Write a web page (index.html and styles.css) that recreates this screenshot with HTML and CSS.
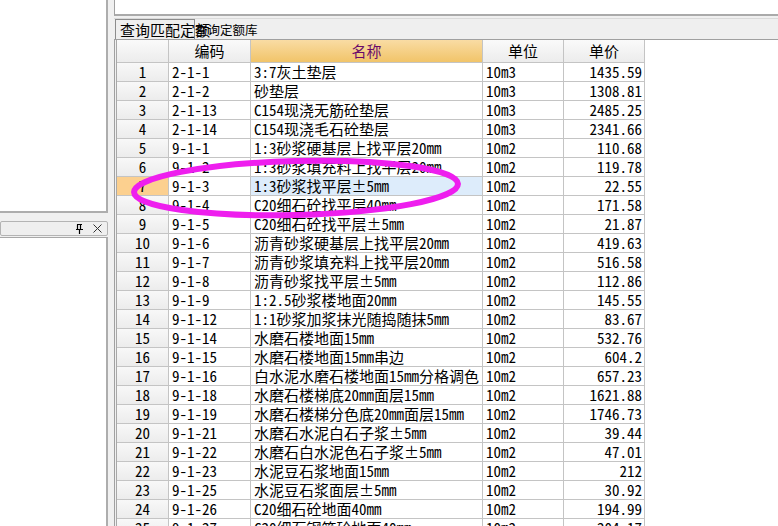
FILE: index.html
```html
<!DOCTYPE html>
<html lang="zh-CN">
<head>
<meta charset="UTF-8">
<title>查询定额库</title>
<link rel="stylesheet" href="styles.css">
</head>
<body>

<div class="app">
    <!-- left dock -->
    <div class="left">
        <div class="left-top"></div>
        <div class="dock-head">
            <svg class="pin" width="7" height="10" viewBox="0 0 7 10">
                <path d="M1 0.5H6M1.5 0.5V5.5M4.5 0.5V5.5M0 5.5H7M3.5 5.5V10" stroke="#000" stroke-width="1.2" fill="none"/>
            </svg>
            <svg class="close" width="9" height="9" viewBox="0 0 9 9">
                <path d="M0.5 0.5L8.5 8.5M8.5 0.5L0.5 8.5" stroke="#333" stroke-width="1" fill="none"/>
            </svg>
        </div>
        <div class="left-body"></div>
    </div>

    <!-- right side -->
    <div class="right">
        <div class="top-panel"></div>
        <div class="tabs">
            <div class="tab active">查询匹配定额</div>
            <div class="tab">查询定额库</div>
        </div>
        <div class="grid-wrap">
            <div class="grid">
                <div class="hd"></div>
                <div class="hd">编码</div>
                <div class="hd sorted">名称</div>
                <div class="hd">单位</div>
                <div class="hd">单价</div>

                <div class="rh">1</div><div class="c">2-1-1</div><div class="c">3:7灰土垫层</div><div class="c">10m3</div><div class="c num">1435.59</div>
                <div class="rh">2</div><div class="c">2-1-2</div><div class="c">砂垫层</div><div class="c">10m3</div><div class="c num">1308.81</div>
                <div class="rh">3</div><div class="c">2-1-13</div><div class="c">C154现浇无筋砼垫层</div><div class="c">10m3</div><div class="c num">2485.25</div>
                <div class="rh">4</div><div class="c">2-1-14</div><div class="c">C154现浇毛石砼垫层</div><div class="c">10m3</div><div class="c num">2341.66</div>
                <div class="rh">5</div><div class="c">9-1-1</div><div class="c">1:3砂浆硬基层上找平层20mm</div><div class="c">10m2</div><div class="c num">110.68</div>
                <div class="rh">6</div><div class="c">9-1-2</div><div class="c">1:3砂浆填充料上找平层20mm</div><div class="c">10m2</div><div class="c num">119.78</div>
                <div class="rh current">7</div><div class="c">9-1-3</div><div class="c selected">1:3砂浆找平层±5mm</div><div class="c">10m2</div><div class="c num">22.55</div>
                <div class="rh">8</div><div class="c">9-1-4</div><div class="c">C20细石砼找平层40mm</div><div class="c">10m2</div><div class="c num">171.58</div>
                <div class="rh">9</div><div class="c">9-1-5</div><div class="c">C20细石砼找平层±5mm</div><div class="c">10m2</div><div class="c num">21.87</div>
                <div class="rh">10</div><div class="c">9-1-6</div><div class="c">沥青砂浆硬基层上找平层20mm</div><div class="c">10m2</div><div class="c num">419.63</div>
                <div class="rh">11</div><div class="c">9-1-7</div><div class="c">沥青砂浆填充料上找平层20mm</div><div class="c">10m2</div><div class="c num">516.58</div>
                <div class="rh">12</div><div class="c">9-1-8</div><div class="c">沥青砂浆找平层±5mm</div><div class="c">10m2</div><div class="c num">112.86</div>
                <div class="rh">13</div><div class="c">9-1-9</div><div class="c">1:2.5砂浆楼地面20mm</div><div class="c">10m2</div><div class="c num">145.55</div>
                <div class="rh">14</div><div class="c">9-1-12</div><div class="c">1:1砂浆加浆抹光随捣随抹5mm</div><div class="c">10m2</div><div class="c num">83.67</div>
                <div class="rh">15</div><div class="c">9-1-14</div><div class="c">水磨石楼地面15mm</div><div class="c">10m2</div><div class="c num">532.76</div>
                <div class="rh">16</div><div class="c">9-1-15</div><div class="c">水磨石楼地面15mm串边</div><div class="c">10m2</div><div class="c num">604.2</div>
                <div class="rh">17</div><div class="c">9-1-16</div><div class="c">白水泥水磨石楼地面15mm分格调色</div><div class="c">10m2</div><div class="c num">657.23</div>
                <div class="rh">18</div><div class="c">9-1-18</div><div class="c">水磨石楼梯底20mm面层15mm</div><div class="c">10m2</div><div class="c num">1621.88</div>
                <div class="rh">19</div><div class="c">9-1-19</div><div class="c">水磨石楼梯分色底20mm面层15mm</div><div class="c">10m2</div><div class="c num">1746.73</div>
                <div class="rh">20</div><div class="c">9-1-21</div><div class="c">水磨石水泥白石子浆±5mm</div><div class="c">10m2</div><div class="c num">39.44</div>
                <div class="rh">21</div><div class="c">9-1-22</div><div class="c">水磨石白水泥色石子浆±5mm</div><div class="c">10m2</div><div class="c num">47.01</div>
                <div class="rh">22</div><div class="c">9-1-23</div><div class="c">水泥豆石浆地面15mm</div><div class="c">10m2</div><div class="c num">212</div>
                <div class="rh">23</div><div class="c">9-1-25</div><div class="c">水泥豆石浆面层±5mm</div><div class="c">10m2</div><div class="c num">30.92</div>
                <div class="rh">24</div><div class="c">9-1-26</div><div class="c">C20细石砼地面40mm</div><div class="c">10m2</div><div class="c num">194.99</div>
                <div class="rh">25</div><div class="c">9-1-27</div><div class="c">C20细石钢筋砼地面40mm</div><div class="c">10m2</div><div class="c num">204.17</div>
            </div>
        </div>
    </div>

    <!-- hand drawn highlight over row 7 -->
    <svg class="mark" width="778" height="526" viewBox="0 0 778 526">
        <ellipse cx="296" cy="188" rx="162" ry="27" transform="rotate(-1.5 296 188)" fill="none" stroke="#ee1eee" stroke-width="6"/>
    </svg>
</div>

</body>
</html>
```

FILE: styles.css
```css
html, body {
    margin: 0;
    padding: 0;
}

body {
    width: 778px;
    height: 526px;
    overflow: hidden;
    background-color: #f0f0f0;
    font-family: "Noto Sans CJK SC", sans-serif;
    color: #000000;
}

.app {
    position: relative;
    display: flex;
    height: 526px;
}

/* left dock */
.left {
    width: 108px;
    display: flex;
    flex-direction: column;
}

.left-top {
    height: 211px;
    background-color: #ffffff;
    border-right: 2px solid #adadad;
    border-bottom: 2px solid #adadad;
}

.dock-head {
    margin-top: 8px;
    height: 13px;
    width: 101px;
    border: 1px solid #b4b4b4;
    border-radius: 2px;
    background-color: #efefef;
    display: flex;
    align-items: center;
    justify-content: flex-end;
    gap: 10px;
    padding-right: 5px;
}

.pin {
    margin-top: 1px;
}

.left-body {
    flex: 1;
    margin-top: 1px;
    background-color: #ffffff;
    border-top: 1px solid #a8a8a8;
    border-right: 2px solid #adadad;
}

/* right side */
.right {
    flex: 1;
    margin-left: 6px;
    display: flex;
    flex-direction: column;
    min-width: 0;
}

.top-panel {
    height: 14px;
    background-color: #ffffff;
    border-left: 1px solid #a0a0a0;
    border-bottom: 2px solid #aaaaaa;
}

.tabs {
    margin-top: 2px;
    height: 20px;
    border-top: 1px solid #dadada;
    border-bottom: 1px solid #a0a0a0;
    background-color: #efefef;
    display: flex;
    align-items: flex-end;
    padding-left: 1px;
}

.tab {
    height: 20px;
    white-space: nowrap;
    line-height: 20px;
}

.tab.active {
    width: 80px;
    border: 1px solid #8c8c8c;
    border-bottom: none;
    box-sizing: border-box;
    font-size: 15px;
    padding-left: 4px;
}

.tab:not(.active) {
    font-size: 12.5px;
    line-height: 22px;
}

.grid-wrap {
    flex: 1;
    background-color: #ffffff;
    border-left: 1px solid #a0a0a0;
    padding-left: 1px;
    background-image: linear-gradient(#f0f0f0, #f0f0f0);
    background-size: 1px 100%;
    background-repeat: no-repeat;
    overflow: hidden;
}

.grid {
    display: grid;
    grid-template-columns: 52px 82px 232px 81px 81px;
    grid-template-rows: 23px;
    grid-auto-rows: 19px;
    border-left: 1px solid #a8a8a8;
    width: max-content;
}

.grid > div {
    box-sizing: border-box;
    border-right: 1px solid #c4c4c4;
    border-bottom: 1px solid #c4c4c4;
    white-space: nowrap;
}

.hd {
    background: linear-gradient(#fafafa, #ececec);
    font-size: 15px;
    line-height: 22px;
    text-align: center;
}

.hd.sorted {
    background: linear-gradient(#f9dca4, #f1c469);
    color: #6a0a6a;
}

.rh {
    background: linear-gradient(#f8f8f8, #ececec);
    font-family: "Noto Sans Mono CJK SC", "Noto Sans CJK SC", monospace;
    font-size: 15px;
    line-height: 18px;
    text-align: center;
}

.rh.current {
    background: #fcd08f;
}

.c {
    font-family: "Noto Sans Mono CJK SC", "Noto Sans CJK SC", monospace;
    font-size: 15px;
    line-height: 18px;
    padding: 0 2px 0 3px;
    background-color: #ffffff;
}

.c.num {
    text-align: right;
}

.c.selected {
    background-color: #ddecfb;
}

.mark {
    position: absolute;
    left: 0;
    top: 0;
    pointer-events: none;
}
```
